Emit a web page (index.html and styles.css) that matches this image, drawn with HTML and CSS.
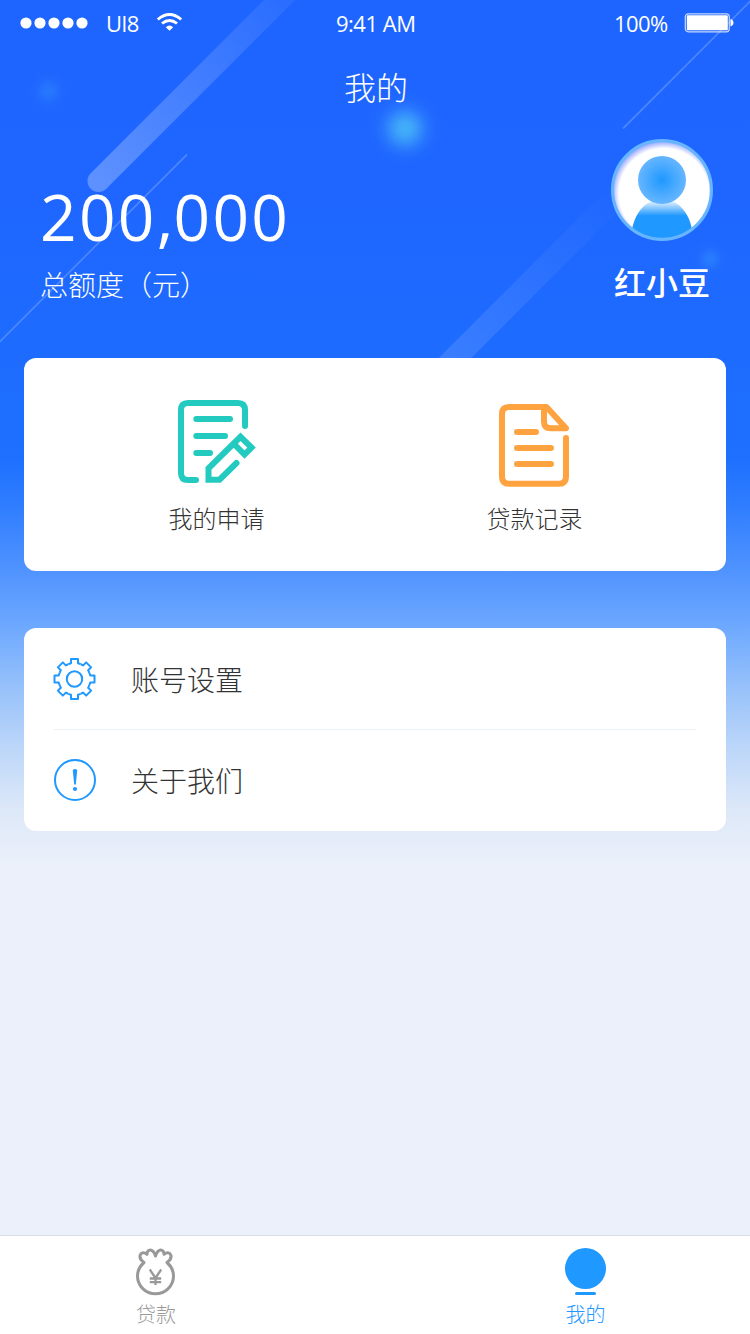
FILE: index.html
```html
<!DOCTYPE html>
<html lang="zh-CN">
<head>
<meta charset="utf-8">
<title>我的</title>
<link rel="stylesheet" href="styles.css">
</head>
<body>
<div class="screen">
  <svg class="decor" width="750" height="358" viewBox="0 0 750 358" aria-hidden="true">
    <defs>
      <linearGradient id="beamA" gradientUnits="userSpaceOnUse" x1="98" y1="181" x2="285" y2="-6">
        <stop offset="0" stop-color="#fff" stop-opacity=".28"/><stop offset="1" stop-color="#fff" stop-opacity=".05"/>
      </linearGradient>
      <linearGradient id="beamB" gradientUnits="userSpaceOnUse" x1="440" y1="374" x2="625" y2="189">
        <stop offset="0" stop-color="#fff" stop-opacity=".13"/><stop offset="1" stop-color="#fff" stop-opacity="0"/>
      </linearGradient>
      <radialGradient id="glow">
        <stop offset="0" stop-color="#46b8f8"/><stop offset=".2" stop-color="#46b4f8" stop-opacity=".9"/><stop offset=".4" stop-color="#46b0f9" stop-opacity=".6"/><stop offset=".6" stop-color="#46a8fa" stop-opacity=".27"/><stop offset=".8" stop-color="#46a4fa" stop-opacity=".07"/><stop offset="1" stop-color="#46a0fa" stop-opacity="0"/>
      </radialGradient>
    </defs>
    <path d="M98.500 181 L298 -18.500" stroke="url(#beamA)" stroke-width="22" stroke-linecap="round"/>
    <path d="M435 378 L625 188" stroke="url(#beamB)" stroke-width="23"/>
    <path d="M-2 343.500 L187 154.500 M623 128.500 L752 -.5" stroke="#fff" stroke-opacity=".2" stroke-width="1.800"/>
    <circle cx="405" cy="128.500" r="37" fill="url(#glow)" opacity=".9"/>
    <circle cx="48.500" cy="91" r="21" fill="url(#glow)" opacity=".22"/>
    <circle cx="710" cy="259" r="19" fill="url(#glow)" opacity=".25"/>
  </svg>

  <header class="status">
    <svg class="signal" width="68" height="12" viewBox="0 0 68 12" fill="#fff"><circle cx="6" cy="6" r="5.600"/><circle cx="20" cy="6" r="5.600"/><circle cx="34" cy="6" r="5.600"/><circle cx="48" cy="6" r="5.600"/><circle cx="62" cy="6" r="5.600"/></svg>
    <span class="carrier">UI8</span>
    <svg class="wifi" width="26" height="20" viewBox="0.500 0 26 20" fill="none" stroke="#fff" stroke-width="2.900"><path d="M1.300 7.500 Q13 -2.300 24.700 7.500"/><path d="M5.500 11.500 Q13 5.300 20.500 11.500"/><path d="M9.300 15.200 Q13 11.600 16.700 15.200 L13 18.800Z" fill="#fff" stroke="none"/></svg>
    <span class="time">9:41 AM</span>
    <span class="percent">100%</span>
    <svg class="battery" width="50" height="20" viewBox="-0.500 0 50 20"><rect x=".8" y=".8" width="44" height="18" rx="3" fill="none" stroke="#fff" stroke-opacity=".75" stroke-width="1.200"/><rect x="2.300" y="2.300" width="41" height="15" rx="1" fill="#fff"/><path d="M46 6 Q49 7 49 9.800 Q49 12.500 46 13.500Z" fill="#fff"/></svg>
  </header>

  <h1 class="title">我的</h1>

  <section class="profile">
    <div class="quota">
      <div class="amount">200<span class="comma">,</span>000</div>
      <div class="caption">总额度（元）</div>
    </div>
    <div class="user">
      <svg class="avatar" width="102" height="102" viewBox="0 0 102 102">
        <defs>
          <radialGradient id="head"><stop offset="0" stop-color="#1f98ff"/><stop offset="1" stop-color="#66b6ff"/></radialGradient>
          <linearGradient id="torso" x1="0" y1="0" x2="0" y2="1"><stop offset="0" stop-color="#fff"/><stop offset=".08" stop-color="#d5ebff"/><stop offset=".4" stop-color="#1f98ff"/></linearGradient>
          <radialGradient id="face" gradientUnits="userSpaceOnUse" cx="53" cy="54.500" r="53"><stop offset=".85" stop-color="#fff"/><stop offset="1" stop-color="#8a9dff"/></radialGradient>
          <clipPath id="disc"><circle cx="51" cy="51" r="48.500"/></clipPath>
        </defs>
        <circle cx="51" cy="51" r="49" fill="url(#face)"/>
        <path clip-path="url(#disc)" d="M20 102 C20 76 34 60 51 60 S82 76 82 102Z" fill="url(#torso)"/>
        <circle cx="51" cy="41" r="24" fill="url(#head)"/>
        <circle cx="51" cy="51" r="49.400" fill="none" stroke="#67b5ff" stroke-width="3.200"/>
      </svg>
      <div class="name">红小豆</div>
    </div>
  </section>

  <nav class="card shortcuts">
    <a class="shortcut">
      <svg class="icon-apply" width="77" height="90" viewBox="0 0 77 90" fill="none" stroke="#22cabf" stroke-width="6" stroke-linecap="round">
        <path d="M67 26 V10 Q67 3 60 3 H10 Q3 3 3 10 V73 Q3 80 10 80 H18"/>
        <path d="M18.300 19 H52 M18.300 36 H47 M18.300 53 H32"/>
        <path d="M58.500 63 L41.500 79.700 H30.500 V68.300 L62.500 36.800 L73.500 47.500 L66.500 54.500 L57 45"/>
      </svg>
      <span>我的申请</span>
    </a>
    <a class="shortcut">
      <svg class="icon-record" width="70" height="90" viewBox="0 0 70 90" fill="none" stroke="#ffa341" stroke-width="6" stroke-linecap="round" stroke-linejoin="round">
        <path d="M67 35 V73.700 Q67 80.700 60 80.700 H10 Q3 80.700 3 73.700 V11 Q3 4 10 4 H47.500 L67 25.300 H52 Q45 25.300 45 19 V4"/>
        <path d="M18 29 H37 M18 45 H52 M18 61 H52"/>
      </svg>
      <span>贷款记录</span>
    </a>
  </nav>

  <nav class="card menu">
    <a class="row">
      <svg width="44" height="44" viewBox="-21.500 -22 44 44" fill="none" stroke="#1f98ff" stroke-width="2" stroke-linejoin="round">
        <defs><path id="tooth" d="M-6.120 -14.780 Q-5 -15.400 -3.500 -15.800 V-20 H3.500 V-15.800 Q5 -15.400 6.120 -14.780"/></defs>
        <use href="#tooth"/><use href="#tooth" transform="rotate(45)"/><use href="#tooth" transform="rotate(90)"/><use href="#tooth" transform="rotate(135)"/><use href="#tooth" transform="rotate(180)"/><use href="#tooth" transform="rotate(225)"/><use href="#tooth" transform="rotate(270)"/><use href="#tooth" transform="rotate(315)"/>
        <circle r="7.700"/>
      </svg>
      <span>账号设置</span>
    </a>
    <a class="row">
      <svg width="44" height="44" viewBox="-22 -21 44 44" fill="#1f98ff"><circle r="20" fill="none" stroke="#1f98ff" stroke-width="2"/><path d="M-2.200 -9.500 Q-2.200 -11 0 -11 T2.200 -9.500 L.8 4.500 H-.8Z"/><circle cy="9" r="2.100"/></svg>
      <span>关于我们</span>
    </a>
  </nav>

  <footer class="tabbar">
    <a class="tab">
      <svg width="42" height="50" viewBox="0.500 0 42 50" fill="none" stroke="#999" stroke-width="3" stroke-linejoin="round" stroke-linecap="round">
        <path d="M9.500 14.500 C6.500 12.500 4.800 9.500 5.800 6.800 C7 4.200 10 4.200 12.500 6.300 C12.500 3.300 14 1.800 16 1.900 C18.500 2.200 20 4.500 21 8 C22 4.500 23.500 2.200 26 1.900 C28 1.800 29.500 3.300 29.500 6.300 C32 4.200 35 4.200 36.200 6.800 C37.200 9.500 35.500 12.500 32.500 14.500 C36.500 18 39 22.500 39 28 A18 17.800 0 0 1 3 28 C3 22.500 5.500 18 9.500 14.500Z"/>
        <path d="M15.300 21.500 L21 30 L26.700 21.500 M21 30 V37 M15.300 30.500 H26.700 M15.300 34.200 H26.700" stroke-width="2.300" stroke-linecap="butt"/>
      </svg>
      <span>贷款</span>
    </a>
    <a class="tab active">
      <svg width="42" height="50" viewBox="0 0 42 50" fill="#1f98ff"><circle cx="20.500" cy="20.500" r="20.500"/><rect x="10" y="44" width="21" height="3" rx="1.500"/></svg>
      <span>我的</span>
    </a>
  </footer>
</div>
</body>
</html>
```
FILE: styles.css
```css
* { box-sizing: border-box; }
body { margin: 0; }
.screen {
  position: relative;
  display: flex;
  flex-direction: column;
  width: 750px;
  height: 1334px;
  overflow: hidden;
  font-family: "Noto Sans CJK SC", sans-serif;
  font-weight: 300;
  color: #333;
  background: linear-gradient(#1e65ff 0, #1e66ff 200px, #1e6cff 360px, #1e70ff 460px, #2f7dff 505px, #4f93ff 570px, #6da8ff 625px, #98c2fa 690px, #bdd7f9 750px, #dde8f8 810px, #ebf0fa 865px);
}
.screen svg { display: block; flex: none; overflow: visible; }
.screen .decor { position: absolute; left: 0; top: 0; overflow: hidden; }
.status {
  position: relative;
  display: flex;
  align-items: center;
  height: 46px;
  padding: 0 16px 0 20px;
  color: #fff;
  font-family: "Open Sans", "Noto Sans CJK SC", sans-serif;
  font-size: 22px;
  font-weight: 400;
  line-height: 44px;
}
.status span { height: 44px; white-space: nowrap; }
.carrier { width: 34px; margin-left: 18px; letter-spacing: -.7px; }
.wifi { margin-left: 17px; margin-top: -2px; }
.time { width: 82px; margin-left: 153px; letter-spacing: -.5px; }
.percent { width: 56px; margin-left: auto; letter-spacing: -.6px; }
.battery { margin-left: 14px; }
.title {
  position: relative;
  margin: 17px 0 0 2px;
  height: 45px;
  color: #fff;
  font-size: 32px;
  font-weight: 300;
  line-height: 46px;
  text-align: center;
}
.profile {
  position: relative;
  display: flex;
  justify-content: space-between;
  height: 250px;
  padding: 31px 34px 0 40px;
  color: #fff;
}
.quota { padding-top: 38px; }
.amount {
  font-family: "Open Sans", "Noto Sans CJK SC", sans-serif;
  font-size: 64px;
  font-weight: 400;
  line-height: 80px;
  letter-spacing: 2.300px;
}
.comma { margin-right: -2px; }
.caption { margin-top: 7px; font-size: 28px; line-height: 40px; }
.user { display: flex; flex-direction: column; align-items: center; width: 108px; }
.name { margin-top: 19px; font-size: 32px; font-weight: 500; line-height: 42px; white-space: nowrap; }
.card { position: relative; margin: 0 24px; border-radius: 12px; background: #fff; }
.shortcuts { display: grid; grid-template-columns: 318px 318px; height: 213px; padding: 42px 33px 0; }
.shortcut { display: flex; flex-direction: column; align-items: center; font-size: 24px; line-height: 36px; }
.shortcut span { margin: 10px 0 0 1px; }
.icon-record { margin-top: 3px; margin-bottom: -3px; }
.menu { height: 203px; margin-top: 57px; padding: 0 30px; }
.row { display: flex; align-items: center; height: 101px; gap: 35px; font-size: 28px; line-height: 40px; }
.row svg { margin-left: -1px; }
.row span { margin: -1px 0 0 -1px; }
.row:first-child span { margin-top: 0; }
.row + .row { height: 102px; border-top: 1px solid #ecf0f7; }
.row + .row span { margin-top: -2px; }
.tabbar {
  display: flex;
  justify-content: space-between;
  height: 99px;
  margin-top: auto;
  padding: 12px 124px 0 116px;
  border-top: 1px solid #d9dfe9;
  background: #fff;
  color: #999;
  font-size: 20px;
  line-height: 32px;
}
.tab { display: flex; flex-direction: column; align-items: center; width: 80px; }
.tab.active { color: #1f98ff; }
.tab.active span { margin-left: -1px; }
```
